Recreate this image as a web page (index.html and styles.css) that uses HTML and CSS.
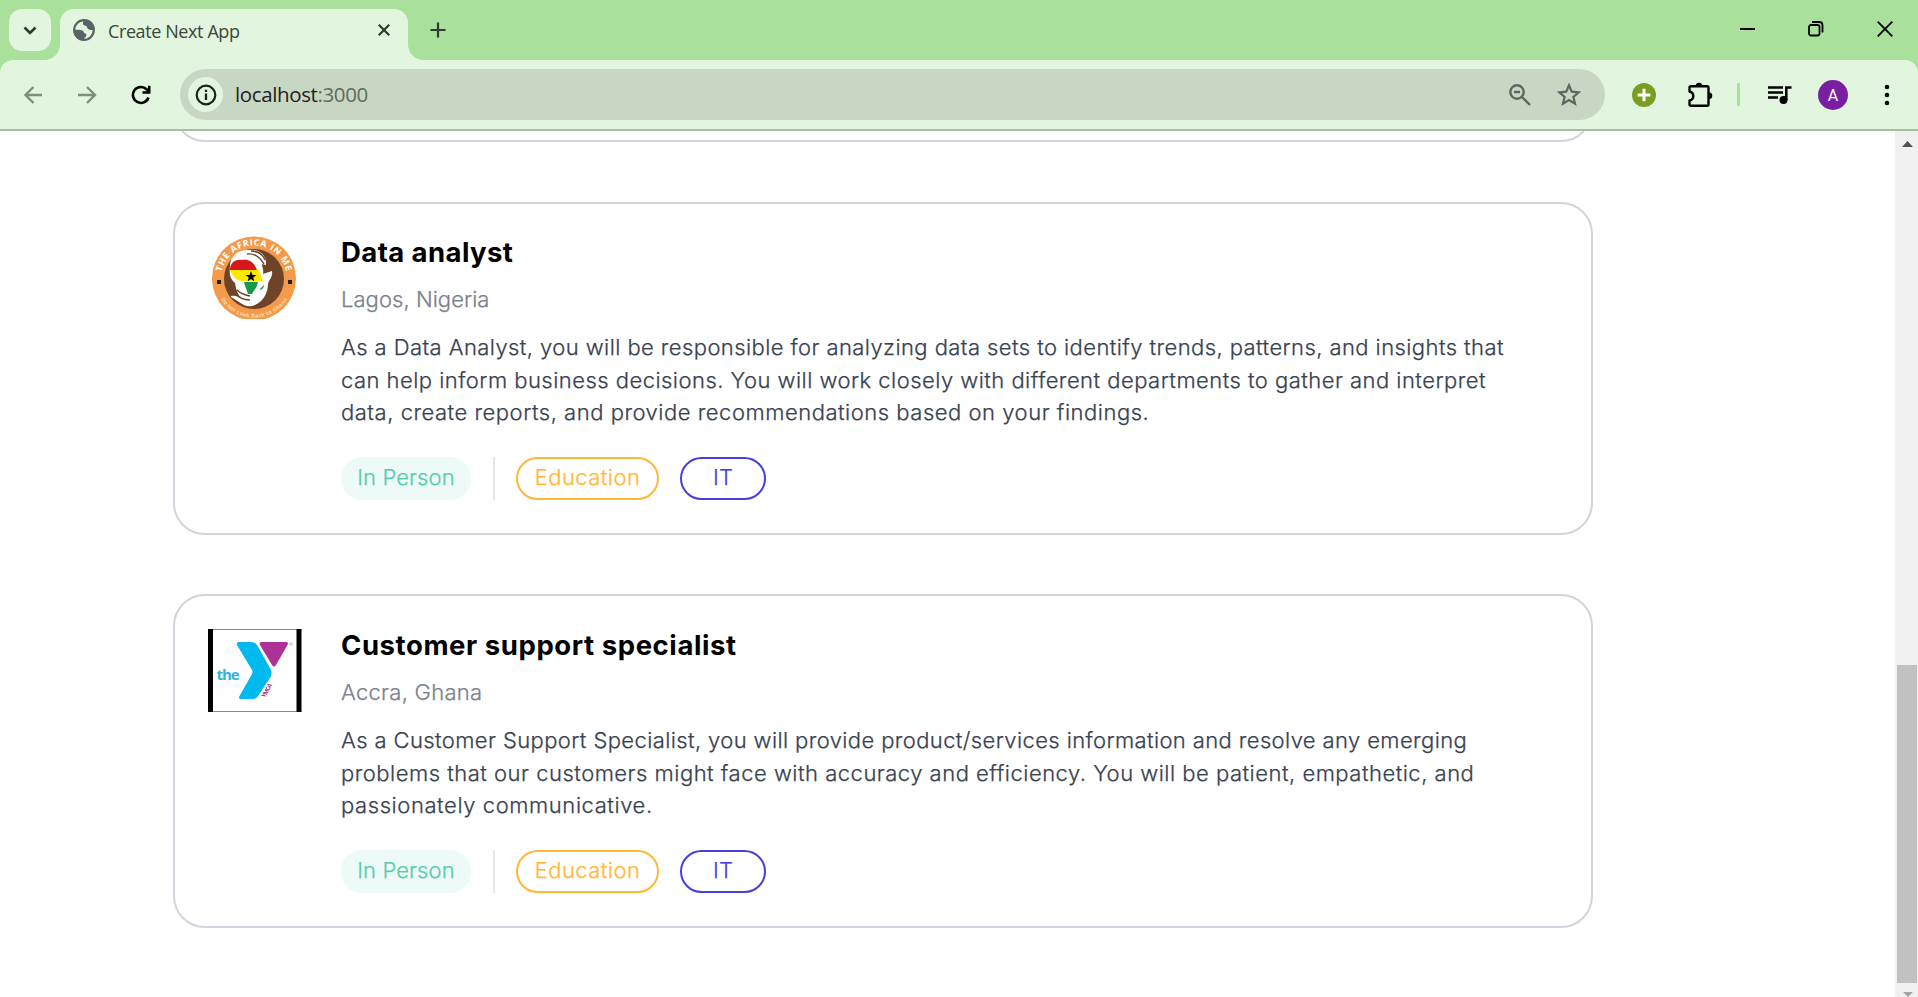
FILE: index.html
```html
<!DOCTYPE html>
<html lang="en">
<head>
<meta charset="utf-8">
<title>Create Next App</title>
<link rel="stylesheet" href="styles.css">
</head>
<body>
<header class="tabstrip">
  <button class="tab-search" aria-label="Search tabs"><svg width="42" height="42" viewBox="0 0 42 42"><path d="M15.500 18.500l5.500 5.500 5.500-5.500" fill="none" stroke="#2f3a30" stroke-width="2.600"/></svg></button>
  <div class="tab">
    <svg class="globe" width="24" height="24" viewBox="0 0 24 24"><circle cx="12" cy="12" r="9.800" fill="none" stroke="#5b6266" stroke-width="2.200"/><path d="M12 1.500c-1 2-1.500 4-.5 5.500 1.500 1 3 .5 3.500 2 .5 2 2 3 4 3h3.500C23 6 18 1 12 1.500zM1.500 12c3-.5 7-.5 9 .5 1.500 1 1 2.500 3 3 1.500.5 1 3-.5 4-1 1-1.500 2-1.500 3C6 22.500 1.500 18 1.500 12z" fill="#5b6266"/></svg>
    <span class="tab-title">Create Next App</span>
    <svg class="tab-close" width="12" height="12" viewBox="0 0 12 12"><path d="M.8.8l10.400 10.400M11.200.8L.8 11.200" stroke="#2f3a30" stroke-width="2.200"/></svg>
  </div>
  <svg class="newtab" width="16" height="16" viewBox="0 0 16 16"><path d="M8 .5v15M.5 8h15" stroke="#2f3a30" stroke-width="2.200"/></svg>
  <div class="window-buttons">
    <svg width="15" height="16" viewBox="0 0 15 16"><path d="M0 8h15" stroke="#000" stroke-width="2"/></svg>
    <svg width="16" height="16" viewBox="0 0 16 16"><rect x="1" y="4" width="10.500" height="10.500" rx="2" fill="none" stroke="#000" stroke-width="1.800"/><path d="M4 1h7q3.500 0 3.500 3.500V11.500" fill="none" stroke="#000" stroke-width="1.800"/></svg>
    <svg width="16" height="16" viewBox="0 0 16 16"><path d="M.7.7l14.600 14.600M15.300.7L.7 15.300" stroke="#000" stroke-width="1.800"/></svg>
  </div>
</header>
<nav class="toolbar">
  <svg class="back" width="20" height="20" viewBox="0 0 20 20"><path d="M18 10H2M9.500 2l-8 8 8 8" fill="none" stroke="#7f8f7b" stroke-width="2.400"/></svg>
  <svg class="forward" width="20" height="20" viewBox="0 0 20 20"><path d="M1 10h16.500M10 2l8 8-8 8" fill="none" stroke="#7f8f7b" stroke-width="2.400"/></svg>
  <svg class="reload" width="20" height="20" viewBox="0 0 20 20"><path d="M17.500 12.500A8 8 0 1 1 15.800 4.500L18 7M18.200.8V7.500H11.500" fill="none" stroke="#000" stroke-width="2.600"/></svg>
  <div class="omnibox">
    <span class="site-info"><svg width="22" height="22" viewBox="0 0 22 22"><circle cx="11" cy="11" r="9.300" fill="none" stroke="#1c211c" stroke-width="2.200"/><path d="M11 9.500v6.500M11 5.700v2.300" stroke="#1c211c" stroke-width="2.300"/></svg></span>
    <span class="url">localhost<span class="port">:3000</span></span>
    <svg class="zoom" width="22" height="22" viewBox="0 0 22 22"><circle cx="8" cy="8" r="6.700" fill="none" stroke="#5f665f" stroke-width="2.400"/><path d="M5 8h6M13 13l8 8" stroke="#5f665f" stroke-width="2.400"/></svg>
    <svg class="star" width="24" height="23" viewBox="0 0 24 23"><path d="M12 2.300l2.700 6.400 7 .6-5.300 4.600 1.600 6.800L12 17.100l-6 3.600 1.600-6.800L2.300 9.300l7-.6z" fill="none" stroke="#5f665f" stroke-width="2.200"/></svg>
  </div>
  <svg class="plus-ext" width="24" height="24" viewBox="0 0 24 24"><circle cx="12" cy="12" r="12" fill="#7a9e24"/><path d="M12 5.700v12.600M5.700 12h12.600" stroke="#fff" stroke-width="3"/></svg>
  <svg class="puzzle" width="26" height="26" viewBox="0 0 26 26"><path d="M4 4.200h16q1.500 0 1.500 1.500v16.600q0 1.500-1.500 1.500H4q-1.500 0-1.500-1.500V18.500q3.800-.8 3.800-4.500t-3.800-4.500V5.700q0-1.500 1.500-1.500z" fill="none" stroke="#000" stroke-width="2.400" stroke-linejoin="round"/><path d="M8.800 4a3.200 3.200 0 0 1 6.400 0zM22 10.500a3.200 3.200 0 0 1 0 6.500z" fill="#000"/></svg>
  <span class="separator"></span>
  <svg class="media" width="24" height="18" viewBox="0 0 24 18"><path d="M0 1.500h15M0 6.500h15M0 11.500h10" stroke="#000" stroke-width="2.300"/><circle cx="15.500" cy="14" r="4" fill="#000"/><path d="M18.300 14V1.500H23.500" fill="none" stroke="#000" stroke-width="2.500"/></svg>
  <span class="avatar">A</span>
  <svg class="menu" width="6" height="22" viewBox="0 0 6 22"><circle cx="3" cy="3" r="2.300"/><circle cx="3" cy="11" r="2.300"/><circle cx="3" cy="19" r="2.300"/></svg>
</nav>
<div class="viewport">
  <main class="jobs">
    <article class="card card-previous"></article>
    <article class="card">
      <svg class="logo" width="94" height="83" viewBox="0 0 94 83">
        <defs><path id="top-arc" d="M13.500 36.800A33 33 0 0 1 78.500 36.800"/><path id="bottom-arc" d="M8 51.500A39 39 0 0 0 84 51.500"/></defs>
        <circle cx="46" cy="42.500" r="42" fill="#f39b4a"/>
        <circle cx="46" cy="43" r="30" fill="#6f4327"/>
        <path d="M22 30C22 20 30 13 42 14c9-1 17 5 16 15l-4-1c0 4 2 5 1 10l9-3c1 6-3 9-4 13 0 8-4 17-13 21-6 3-12 0-16-3l-8-5c-1-2 3-1 9 0-3-5-4-8-5-14-5-4-6-9-5-17z" fill="#fff"/>
        <path d="M39 18c8-1 13 3 17 10M43 15c7 0 12 4 14 9M27 57c4 5 9 7 15 7M29 54c4 4 8 5 13 6" fill="none" stroke="#6f4327" stroke-width="1.400"/>
        <path d="M22 34c0-7 5-11 12-10 7-1 12 2 15 10z" fill="#d9161c"/>
        <path d="M22 34h29l4 11H36c-7 0-11-3-14-11z" fill="#ffe800"/>
        <path d="M36 46h14c-1 6-4 8-6 12h-4c-1-4-3-7-4-12zM52 53l4-4q0 4-4 5z" fill="#149b4a"/>
        <path d="M43 35l1.400 4h4.100l-3.300 2.500 1.200 4L43 43l-3.400 2.500 1.200-4-3.300-2.500h4.100z"/>
        <path d="M9 44h4v4H9zM80 44h4v4h-4z" fill="#222"/>
        <text class="seal-top"><textPath href="#top-arc" startOffset="50%" text-anchor="middle">THE AFRICA IN ME</textPath></text>
        <text class="seal-bottom"><textPath href="#bottom-arc" startOffset="50%" text-anchor="middle">Do not Look Back to Ghana</textPath></text>
      </svg>
      <div class="details">
        <h2 class="title title-analyst">Data analyst</h2>
        <p class="place place-lagos">Lagos, Nigeria</p>
        <p class="description">
          <span class="line a1">As a Data Analyst, you will be responsible for analyzing data sets to identify trends, patterns, and insights that</span>
          <span class="line a2">can help inform business decisions. You will work closely with different departments to gather and interpret</span>
          <span class="line a3">data, create reports, and provide recommendations based on your findings.</span>
        </p>
        <div class="tags"><span class="tag mode">In Person</span><span class="divider"></span><span class="tag education">Education</span><span class="tag it">IT</span></div>
      </div>
    </article>
    <article class="card card-last">
      <svg class="logo" width="94" height="83" viewBox="0 0 94 83">
        <path d="M0 0h93.500v83H0z" fill="#fefefe"/><path d="M0 .5h93.500M0 82.500h93.500" stroke="#8a8a8a"/><path d="M0 0h5v83H0zM88.500 0h5v83h-5z"/>
        <path d="M31 13h12q4 0 6 3l13 23q3 5 0 10L50 67q-2 3-5 3H33q-3 0-1.500-3L44 45q1-2 0-4L29 16q-1-3 2-3z" fill="#00b9ee"/>
        <path d="M54 13h24q3 0 1.500 3L68 36q-2 3-4 0L52 16q-1.500-3 2-3z" fill="#ad3298"/>
        <text class="y-the" x="8.500" y="51" textLength="23">the</text>
        <text class="y-name" transform="translate(57 69) rotate(-61)" textLength="15">YMCA</text>
        <circle cx="83" cy="15" r="1.300" fill="none" stroke="#d9a0cf" stroke-width=".8"/>
      </svg>
      <div class="details">
        <h2 class="title title-support">Customer support specialist</h2>
        <p class="place place-accra">Accra, Ghana</p>
        <p class="description">
          <span class="line b1">As a Customer Support Specialist, you will provide product/services information and resolve any emerging</span>
          <span class="line b2">problems that our customers might face with accuracy and efficiency. You will be patient, empathetic, and</span>
          <span class="line b3">passionately communicative.</span>
        </p>
        <div class="tags"><span class="tag mode">In Person</span><span class="divider"></span><span class="tag education">Education</span><span class="tag it">IT</span></div>
      </div>
    </article>
  </main>
  <aside class="scrollbar">
    <svg class="arrow-up" width="11" height="6" viewBox="0 0 11 6"><path d="M0 6L5.500 0 11 6z" fill="#505050"/></svg>
    <span class="thumb"></span>
    <svg class="arrow-down" width="10" height="5" viewBox="0 0 10 5"><path d="M0 0h10L5 5z" fill="#a3a3a3"/></svg>
  </aside>
</div>
</body>
</html>
```

FILE: styles.css
```css
* { box-sizing: border-box; }
body { margin: 0; width: 1918px; height: 997px; overflow: hidden; display: flex; flex-direction: column; background: linear-gradient(#a8e09c 100px, #fff 100px); font-family: Inter, "Liberation Sans", sans-serif; }
svg { display: block; flex: none; }
h2, p { margin: 0; }

/* Tab strip */
.tabstrip { height: 60px; flex: none; display: flex; background: #a8e09c; padding-left: 9px; }
.tab-search { width: 42px; height: 42px; margin: 9px 9px 0 0; padding: 0; border: 0; border-radius: 13px; background: #e2f5de; flex: none; }
.tab { position: relative; width: 348px; height: 51px; margin-top: 9px; padding: 0 18px 9px 13px; display: flex; align-items: center; background: #e2f5de; border-radius: 14px 14px 0 0; }
.tab::before, .tab::after { content: ""; position: absolute; bottom: 0; width: 15px; height: 15px; }
.tab::before { right: 100%; background: radial-gradient(circle at 0 0, transparent 14.500px, #e2f5de 15px); }
.tab::after { left: 100%; background: radial-gradient(circle at 100% 0, transparent 14.500px, #e2f5de 15px); }
.globe { margin-left: -1px; }
.tab-title { margin: 2px auto 0 12px; font: 18px "Open Sans", sans-serif; letter-spacing: -.4px; color: #3a463a; white-space: nowrap; }
.newtab { margin: 22px 0 0 22px; }
.window-buttons { margin: 21px 25px 0 auto; display: flex; gap: 53px; }

/* Toolbar */
.toolbar { height: 71px; flex: none; display: flex; align-items: center; padding: 0 28px 0 24px; background: #e2f5de; border-bottom: 2px solid #a5bfa3; border-radius: 13px 13px 0 0; }
.forward { margin-left: 33px; }
.reload { margin-left: 34px; }
.omnibox { width: 1425px; height: 51px; margin-left: 29px; padding: 0 24px 0 8px; display: flex; align-items: center; border-radius: 26px; background: #c8d7c4; }
.site-info { width: 35px; height: 35px; border-radius: 50%; display: grid; place-items: center; background: #e2f5de; }
.url { margin: 0 auto 2px 12px; font: 20.500px "Open Sans", sans-serif; letter-spacing: -.38px; color: #1c211c; }
.port { color: #5f6b5e; }
.star { margin-left: 26px; }
.plus-ext { margin-left: 27px; }
.puzzle { margin-left: 31px; }
.separator { width: 3px; height: 23px; margin-left: 24px; background: #a8e09c; border-radius: 1px; }
.media { margin-left: 28px; }
.avatar { width: 30px; height: 30px; margin-left: 26px; border-radius: 50%; background: #7b1fa2; color: #fff; font: 16px/31px Roboto, sans-serif; text-align: center; }
.menu { margin-left: auto; }

/* Job list */
.viewport { flex: 1; min-height: 0; display: flex; justify-content: space-between; background: #fff; overflow: hidden; }
.jobs { width: 1420px; margin-left: 173px; flex: none; }
.card { height: 333px; margin-bottom: 60px; padding: 32px 33px; border: 2px solid #d1d5db; border-radius: 32px; display: flex; align-items: flex-start; }
.card-previous { margin-top: -322px; }
.card-last { height: 334px; margin-top: -1px; padding-top: 33px; }
.logo { margin-right: 39px; }
.details { width: 1200px; }
.title { font-size: 27.500px; line-height: 32px; font-weight: 700; color: #000; width: max-content; }
.title-analyst { letter-spacing: .42px; }
.title-support { letter-spacing: .57px; }
.place, .description, .tag { font-size: 22px; font-weight: 300; -webkit-text-stroke: .25px currentColor; }
.place { margin-top: 15px; line-height: 32px; color: #7b818e; width: max-content; }
.place-lagos { letter-spacing: .05px; }
.place-accra { letter-spacing: .27px; }
.description { margin-top: 16px; line-height: 32.600px; color: #374151; }
.line { display: block; width: max-content; white-space: nowrap; }
.a1 { letter-spacing: .42px; }
.a2 { letter-spacing: .47px; }
.a3 { letter-spacing: .52px; }
.b1 { letter-spacing: .39px; }
.b2 { letter-spacing: .5px; }
.b3 { letter-spacing: .58px; }
.tags { display: flex; margin-top: 28.200px; }
.tag { height: 43px; border-radius: 22px; line-height: 37px; text-align: center; border: 2px solid; }
.mode { width: 130px; color: #56cdad; background: #eefaf7; border-color: #eefaf7; letter-spacing: .1px; }
.divider { width: 2px; height: 43px; margin: 0 21px 0 22px; background: #e5e7eb; }
.education { width: 143px; color: #ffb836; margin-right: 21px; letter-spacing: .45px; }
.it { width: 86px; color: #4640de; }

/* Logo lettering */
.seal-top { font: 700 9px "Open Sans", sans-serif; fill: #fff; letter-spacing: .6px; }
.seal-bottom { font: 700 5.500px "Open Sans", sans-serif; fill: #fbd8b2; letter-spacing: .2px; }
.y-the { font: 700 15px "Open Sans", sans-serif; fill: #2bb5dc; }
.y-name { font: 700 6px "Open Sans", sans-serif; fill: #ad3298; }

/* Scrollbar */
.scrollbar { width: 23px; background: #f0f0f0; display: flex; flex-direction: column; align-items: center; }
.arrow-up { margin: 10px 0 0 1px; }
.thumb { width: 20px; height: 319px; margin-top: 518px; margin-left: 1px; background: #c1c1c1; }
.arrow-down { margin: 9px 0 0 2px; }
```
